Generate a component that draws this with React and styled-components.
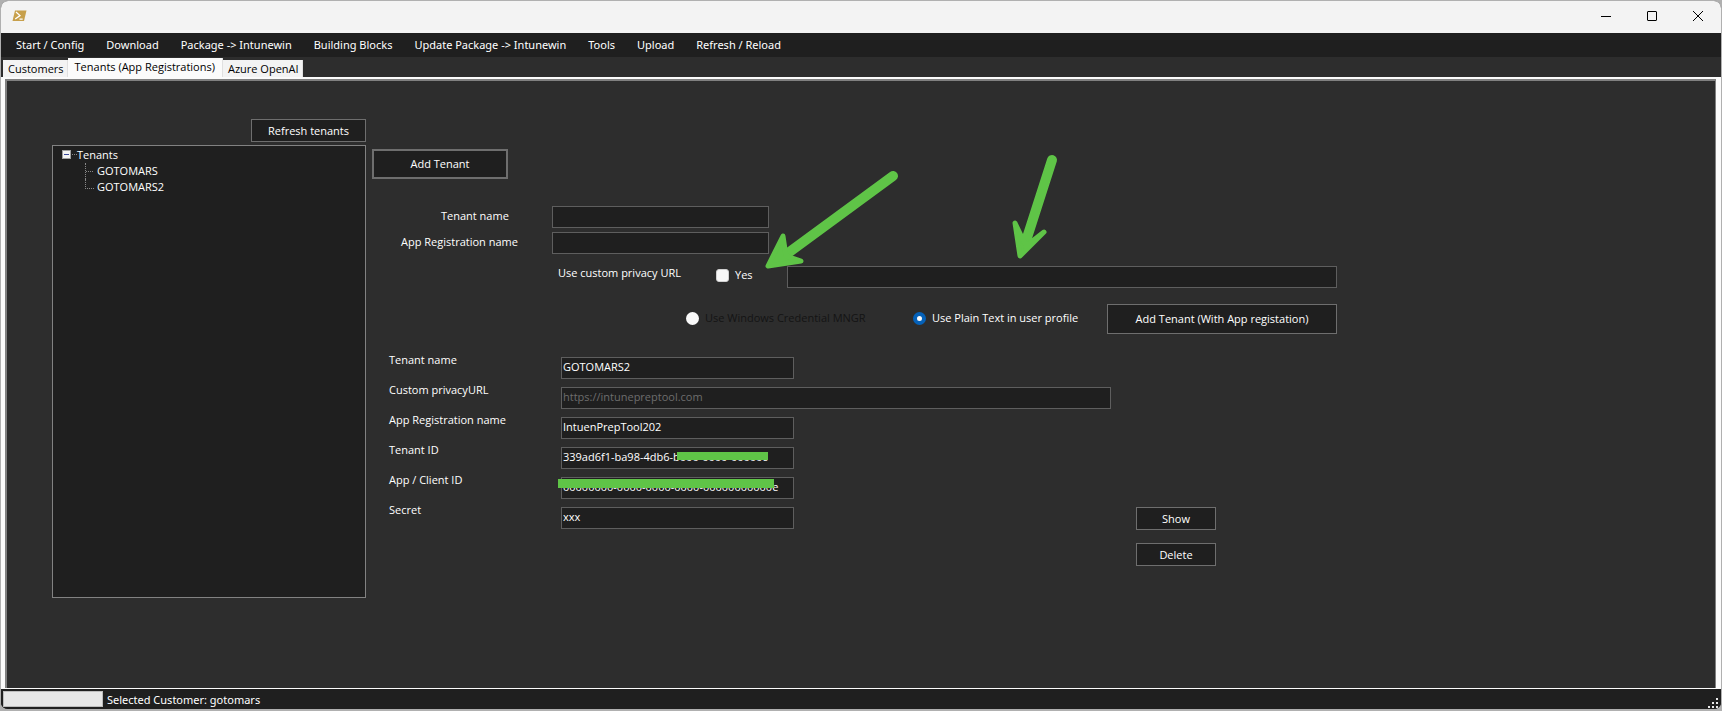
import React, { useState } from 'react';
import styled, { createGlobalStyle } from 'styled-components';

const GlobalStyle = createGlobalStyle`
  * {
    box-sizing: border-box;
  }

  body {
    margin: 0;
    background: #b0b0b0;
    font-family: 'Open Sans', 'Noto Sans', sans-serif;
    font-size: 11px;
    color: #fff;
  }

  button, input {
    font: inherit;
    color: inherit;
  }
`;

const menuItems = [
  'Start / Config',
  'Download',
  'Package -> Intunewin',
  'Building Blocks',
  'Update Package -> Intunewin',
  'Tools',
  'Upload',
  'Refresh / Reload',
];

const tabs = ['Customers', 'Tenants (App Registrations)', 'Azure OpenAI'];

const details = [
  { id: 'd-name', label: 'Tenant name', value: 'GOTOMARS2' },
  { id: 'd-url', label: 'Custom privacyURL', placeholder: 'https://intunepreptool.com', wide: true },
  { id: 'd-app', label: 'App Registration name', value: 'IntuenPrepTool202' },
  { id: 'd-tid', label: 'Tenant ID', value: '339ad6f1-ba98-4db6-b000-0000-00000c', mask: 'partial' },
  { id: 'd-cid', label: 'App / Client ID', value: '00000000-0000-0000-0000-00000000000e', mask: 'full' },
  { id: 'd-secret', label: 'Secret', value: 'xxx' },
];

const App = () => {
  const [activeTab, setActiveTab] = useState(tabs[1]);
  const [customUrl, setCustomUrl] = useState(false);
  const [storage, setStorage] = useState('plain');

  return (
    <Window>
      <GlobalStyle />
      <TitleBar>
        <svg width="15" height="12" viewBox="0 0 15 12" aria-hidden="true">
          <path d="M3 0.5h11.5L12 11H0.5z" fill="#c7a04c" />
          <path d="M4 2l4 3.6L3.2 9M7.5 9.2h3.2" fill="none" stroke="#fff" strokeWidth="1.3" />
        </svg>
        <Controls>
          <Caption aria-label="Minimize">
            <svg width="10" height="10"><path d="M0 5.5h10" stroke="#000" /></svg>
          </Caption>
          <Caption aria-label="Maximize">
            <svg width="10" height="10"><rect x="0.5" y="0.5" width="9" height="9" rx="0.5" fill="none" stroke="#000" /></svg>
          </Caption>
          <Caption aria-label="Close">
            <svg width="10" height="10"><path d="M0 0l10 10M10 0L0 10" stroke="#000" /></svg>
          </Caption>
        </Controls>
      </TitleBar>

      <MenuBar>
        {menuItems.map((item) => (
          <MenuItem key={item}>{item}</MenuItem>
        ))}
      </MenuBar>

      <TabStrip role="tablist">
        {tabs.map((tab) => (
          <Tab
            key={tab}
            role="tab"
            aria-selected={tab === activeTab}
            $active={tab === activeTab}
            onClick={() => setActiveTab(tab)}
          >
            {tab}
          </Tab>
        ))}
      </TabStrip>

      <Panel>
        <Sidebar>
          <RefreshButton>Refresh tenants</RefreshButton>
          <Tree>
            <TreeRoot>
              <svg width="15" height="10" aria-hidden="true">
                <rect x="0.5" y="0.5" width="8" height="8" fill="#f4f4f4" stroke="#a0a0a0" />
                <path d="M2 4.5h5" stroke="#3a4a9a" />
                <path d="M10 4.5h5" stroke="#888" strokeDasharray="1 1" />
              </svg>
              Tenants
            </TreeRoot>
            <TreeLeaf>GOTOMARS</TreeLeaf>
            <TreeLeaf $last>GOTOMARS2</TreeLeaf>
          </Tree>
        </Sidebar>

        <Main>
          <AddButton>Add Tenant</AddButton>

          <NewTenant>
            <Label htmlFor="n-name" $indent={69}>Tenant name</Label>
            <TextBox id="n-name" />
            <Label htmlFor="n-app" $indent={29}>App Registration name</Label>
            <TextBox id="n-app" />
          </NewTenant>

          <PrivacyRow>
            <Label as="span" id="privacy-label">Use custom privacy URL</Label>
            <Choice>
              <CheckBox
                type="checkbox"
                checked={customUrl}
                onChange={(e) => setCustomUrl(e.target.checked)}
              />
              Yes
            </Choice>
            <TextBox aria-labelledby="privacy-label" />
          </PrivacyRow>

          <StorageRow>
            <Choice $disabled>
              <Radio type="radio" name="storage" disabled checked={storage === 'mngr'} readOnly />
              Use Windows Credential MNGR
            </Choice>
            <Choice>
              <Radio
                type="radio"
                name="storage"
                checked={storage === 'plain'}
                onChange={() => setStorage('plain')}
              />
              Use Plain Text in user profile
            </Choice>
            <RegisterButton>Add Tenant (With App registation)</RegisterButton>
          </StorageRow>

          <Details>
            <LabelColumn>
              {details.map((d) => (
                <Label key={d.id} htmlFor={d.id}>{d.label}</Label>
              ))}
            </LabelColumn>
            <FieldColumn>
              {details.map((d) => (
                <Field key={d.id} $wide={d.wide}>
                  <TextBox id={d.id} defaultValue={d.value} placeholder={d.placeholder} />
                  {d.mask && <Mask $full={d.mask === 'full'} />}
                </Field>
              ))}
            </FieldColumn>
            <Actions>
              <Button>Show</Button>
              <Button>Delete</Button>
            </Actions>
          </Details>
        </Main>

        <Arrows width="300" height="120" viewBox="760 150 300 120" aria-hidden="true">
          <path d="M893 176L784 256" strokeWidth="10" />
          <path d="M783 236L768 266L801 261L786 256Z" strokeWidth="5" />
          <path d="M1052 160L1025 244" strokeWidth="10" />
          <path d="M1015 223L1020 256L1044 232L1026 246Z" strokeWidth="5" />
        </Arrows>
      </Panel>

      <StatusBar>
        <Progress role="progressbar" aria-label="Progress" />
        <span>Selected Customer: gotomars</span>
        <Grip width="12" height="12" viewBox="0 0 12 12" aria-hidden="true">
          <path d="M9 1h2v2h-2zM9 5h2v2h-2zM5 5h2v2h-2zM9 9h2v2h-2zM5 9h2v2h-2zM1 9h2v2h-2z" fill="#e8e8e8" />
        </Grip>
      </StatusBar>
    </Window>
  );
};

const Window = styled.div`
  display: flex;
  flex-direction: column;
  min-height: 100vh;
  border: 1px solid #b0b0b0;
  border-bottom-width: 2px;
  border-radius: 8px;
  overflow: hidden;
  background: #2d2d2d;
`;

const TitleBar = styled.header`
  display: flex;
  align-items: center;
  height: 32px;
  padding: 0 0 2px 11px;
  background: #f3f3f3;
`;

const Controls = styled.div`
  display: flex;
  margin-left: auto;
`;

const Caption = styled.button`
  display: flex;
  align-items: center;
  justify-content: center;
  width: 46px;
  height: 28px;
  padding: 0;
  border: none;
  background: none;
`;

const MenuBar = styled.nav`
  display: flex;
  align-items: center;
  height: 24px;
  padding-left: 4px;
  background: #1f1f1f;
  font-family: 'Noto Sans', sans-serif;
`;

const MenuItem = styled.button`
  padding: 0 11px;
  border: none;
  background: none;
  line-height: 22px;
  white-space: nowrap;
`;

const TabStrip = styled.div`
  display: flex;
  align-items: flex-end;
  height: 20px;
  padding-left: 2px;
`;

const Tab = styled.button`
  height: ${props => props.$active ? '19px' : '17px'};
  padding: ${props => props.$active ? '0 7px 2px' : '0 3px 0 5px'};
  border: none;
  border-right: 1px solid #e0e0e0;
  background: ${props => props.$active ? '#fbfbfb' : '#f3f3f3'};
  color: #000;
  line-height: 17px;
  white-space: nowrap;
`;

const Panel = styled.main`
  position: relative;
  flex: 1;
  display: flex;
  align-items: flex-start;
  gap: 6px;
  padding: 38px 24px 24px 45px;
  border: solid #fbfbfb;
  border-width: 2px 5px 1px 4px;
  box-shadow: inset 2px 2px 0 #808080, inset -1px 0 0 #808080;
`;

const Sidebar = styled.aside`
  display: flex;
  flex-direction: column;
  flex: 0 0 314px;
  gap: 3px;
  margin-left: 2px;
  padding-top: 2px;
`;

const Button = styled.button`
  height: 23px;
  padding: 0 8px;
  border: 1px solid #6e6e6e;
  background: #1f1f1f;
  line-height: 20px;
  white-space: nowrap;
`;

const RefreshButton = styled(Button)`
  align-self: flex-end;
  width: 115px;
`;

const AddButton = styled(Button)`
  width: 136px;
  height: 30px;
  border-width: 2px;
`;

const RegisterButton = styled(Button)`
  width: 230px;
  height: 30px;
  margin-left: auto;
`;

const Tree = styled.ul`
  min-height: 453px;
  margin: 0;
  padding: 1px 9px;
  border: 1px solid #828282;
  background: #1f1f1f;
  list-style: none;
  line-height: 16px;
`;

const TreeRoot = styled.li`
  display: flex;
  align-items: center;
`;

const TreeLeaf = styled.li`
  display: flex;
  gap: 3px;
  padding-left: 23px;

  &::before {
    content: '';
    width: 8px;
    height: ${props => props.$last ? '9px' : '16px'};
    border-left: 1px dotted #888;
    border-bottom: ${props => props.$last ? '1px dotted #888' : 'none'};
    background: ${props => props.$last ? 'none' : 'repeating-linear-gradient(90deg, #888 0 1px, transparent 1px 2px) 0 8px / 100% 1px no-repeat'};
  }
`;

const Main = styled.div`
  flex: 1;
  max-width: 965px;
  padding-top: 32px;
`;

const Label = styled.label`
  padding-left: ${props => props.$indent || 0}px;
  line-height: 14px;
  white-space: nowrap;
`;

const TextBox = styled.input`
  width: 100%;
  height: 22px;
  padding: 0 1px 4px;
  border: 1px solid #5e5e5e;
  border-radius: 0;
  background: #1f1f1f;
  outline: none;

  &::placeholder {
    color: #6d6d6d;
    opacity: 1;
  }
`;

const NewTenant = styled.div`
  display: grid;
  grid-template-columns: 180px 217px;
  align-items: center;
  row-gap: 4px;
  margin-top: 27px;

  ${Label} {
    padding-bottom: 2px;
  }
`;

const Choice = styled.label`
  display: flex;
  align-items: center;
  gap: 6px;
  line-height: 18px;
  white-space: nowrap;
  color: ${props => props.$disabled ? '#141414' : '#fff'};
`;

const CheckBox = styled.input`
  appearance: none;
  width: 13px;
  height: 13px;
  margin: 0;
  border: 1px solid #d0d0d0;
  border-radius: 3px;
  background: #f8f8f8;

  &:checked {
    background: #005fb8;
  }
`;

const Radio = styled.input`
  appearance: none;
  width: 13px;
  height: 13px;
  margin: 0;
  border-radius: 50%;
  background: #fafafa;

  &:checked {
    border: 4px solid #0561b8;
  }
`;

const PrivacyRow = styled.div`
  display: grid;
  grid-template-columns: 158px 71px 1fr;
  align-items: start;
  margin-top: 12px;
  padding-left: 186px;
`;

const StorageRow = styled.div`
  display: grid;
  grid-template-columns: 227px 190px 1fr;
  align-items: start;
  margin-top: 16px;
  padding-left: 314px;

  ${Choice} {
    line-height: 28px;
  }
`;

const Details = styled.div`
  display: flex;
  margin-top: 19px;
  padding-left: 17px;
`;

const LabelColumn = styled.div`
  display: flex;
  flex-direction: column;
  flex: 0 0 172px;
  gap: 16px;
`;

const FieldColumn = styled.div`
  display: flex;
  flex-direction: column;
  flex: 0 1 550px;
  gap: 8px;
  padding-top: 4px;
`;

const Field = styled.div`
  position: relative;
  width: ${props => props.$wide ? '100%' : '233px'};
  height: 22px;
`;

const Mask = styled.span`
  position: absolute;
  top: ${props => props.$full ? '2px' : '5px'};
  left: ${props => props.$full ? '-3px' : '116px'};
  width: ${props => props.$full ? '216px' : '91px'};
  height: ${props => props.$full ? '9px' : '8px'};
  background: #5fc447;
`;

const Actions = styled.div`
  display: flex;
  flex-direction: column;
  gap: 13px;
  width: 80px;
  margin: 154px 0 0 25px;
`;

const Arrows = styled.svg`
  position: absolute;
  top: 71px;
  left: 755px;
  pointer-events: none;
  overflow: visible;
  fill: #5fc447;
  stroke: #5fc447;
  stroke-linecap: round;
  stroke-linejoin: round;
`;

const StatusBar = styled.footer`
  display: flex;
  align-items: center;
  gap: 4px;
  height: 20px;
  padding: 0 2px;
  background: #1f1f1f;
  font-family: 'Noto Sans', sans-serif;
`;

const Progress = styled.div`
  width: 100px;
  height: 16px;
  border: 1px solid #bcbcbc;
  background: #e6e6e6;
`;

const Grip = styled.svg`
  align-self: flex-end;
  margin-left: auto;
`;

export default App;
